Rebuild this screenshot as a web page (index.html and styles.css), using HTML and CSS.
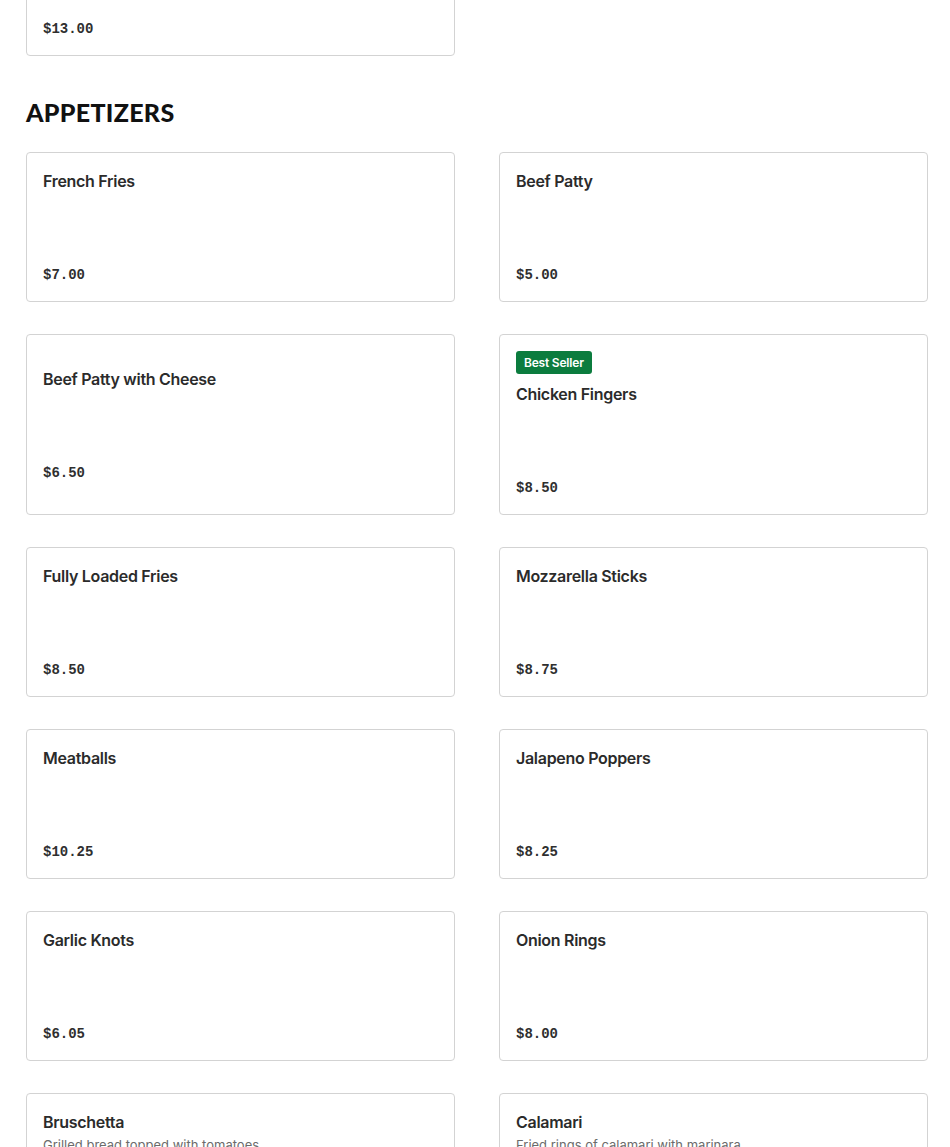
FILE: index.html
```html
<!DOCTYPE html>
<html lang="en">
<head>
<meta charset="utf-8">
<title>Menu – Appetizers</title>
<link rel="stylesheet" href="styles.css">
</head>
<body>
<main class="menu">
  <section class="section section--prev">
    <div class="grid">
      <article class="card card--clipped">
        <div class="card-body">
          <div class="price">$13.00</div>
        </div>
      </article>
    </div>
  </section>

  <section class="section">
    <h2 class="section-title">APPETIZERS</h2>
    <div class="grid">
      <article class="card"><div class="card-body"><h3 class="item-name">French Fries</h3><p class="desc"></p><div class="price">$7.00</div></div></article>
      <article class="card"><div class="card-body"><h3 class="item-name">Beef Patty</h3><p class="desc"></p><div class="price">$5.00</div></div></article>
      <article class="card"><div class="card-body"><h3 class="item-name">Beef Patty with Cheese</h3><p class="desc"></p><div class="price">$6.50</div></div></article>
      <article class="card"><div class="card-body"><span class="badge">Best Seller</span><h3 class="item-name">Chicken Fingers</h3><p class="desc"></p><div class="price">$8.50</div></div></article>
      <article class="card"><div class="card-body"><h3 class="item-name">Fully Loaded Fries</h3><p class="desc"></p><div class="price">$8.50</div></div></article>
      <article class="card"><div class="card-body"><h3 class="item-name">Mozzarella Sticks</h3><p class="desc"></p><div class="price">$8.75</div></div></article>
      <article class="card"><div class="card-body"><h3 class="item-name">Meatballs</h3><p class="desc"></p><div class="price">$10.25</div></div></article>
      <article class="card"><div class="card-body"><h3 class="item-name">Jalapeno Poppers</h3><p class="desc"></p><div class="price">$8.25</div></div></article>
      <article class="card"><div class="card-body"><h3 class="item-name">Garlic Knots</h3><p class="desc"></p><div class="price">$6.05</div></div></article>
      <article class="card"><div class="card-body"><h3 class="item-name">Onion Rings</h3><p class="desc"></p><div class="price">$8.00</div></div></article>
      <article class="card"><div class="card-body"><h3 class="item-name">Bruschetta</h3><p class="desc">Grilled bread topped with tomatoes</p><div class="price">$9.00</div></div></article>
      <article class="card"><div class="card-body"><h3 class="item-name">Calamari</h3><p class="desc">Fried rings of calamari with marinara</p><div class="price">$12.00</div></div></article>
    </div>
  </section>
</main>
</body>
</html>
```

FILE: styles.css
```css
* { box-sizing: border-box; }

html, body {
  margin: 0;
  padding: 0;
  background: #ffffff;
}

body {
  font-family: Inter, "Noto Sans", Arial, sans-serif;
  color: #2b2b2b;
}

.menu {
  width: 902px;
  margin-left: 26px;
  margin-top: -94px;
}

.section-title {
  margin: 39px 0 23px;
  font-family: Lato, "Noto Sans", sans-serif;
  font-weight: 900;
  font-size: 25px;
  line-height: 34px;
  letter-spacing: 0.3px;
  color: #111111;
}

.grid {
  display: grid;
  grid-template-columns: 1fr 1fr;
  column-gap: 44px;
  row-gap: 32px;
}

.card {
  display: flex;
  flex-direction: column;
  justify-content: center;
  min-height: 150px;
  padding: 16px;
  border: 1px solid #d3d3d3;
  border-radius: 4px;
  background: #fff;
}

.card-body {
  display: flex;
  flex-direction: column;
  align-items: flex-start;
}

.card--clipped {
  justify-content: flex-end;
}

.badge {
  display: inline-block;
  height: 23px;
  line-height: 23px;
  padding: 0 8px;
  margin-bottom: 8px;
  border-radius: 3px;
  background: #0b7c3e;
  color: #fff;
  font-size: 12px;
  font-weight: 600;
  letter-spacing: -0.2px;
}

.item-name {
  margin: 0;
  font-size: 16px;
  line-height: 24px;
  font-weight: 600;
  letter-spacing: -0.3px;
  color: #2b2b2b;
}

.desc {
  margin: 0;
  min-height: 72px;
  font-size: 13px;
  line-height: 22px;
  color: #6b6b6b;
}

.price {
  font-family: "Liberation Mono", "DejaVu Sans Mono", monospace;
  font-weight: 700;
  font-size: 14px;
  line-height: 20px;
  color: #2f2f2f;
}
```
